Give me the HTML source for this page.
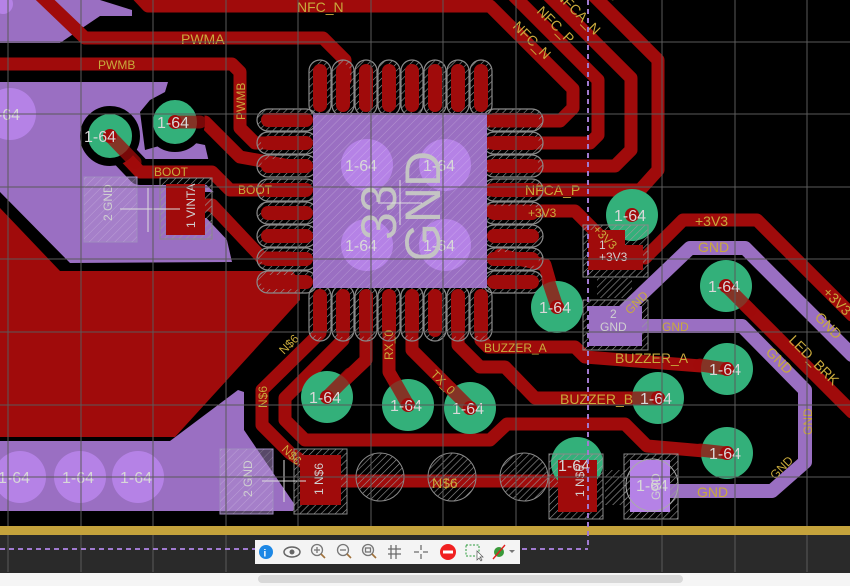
<!DOCTYPE html>
<html><head><meta charset="utf-8"><style>
html,body{margin:0;padding:0;background:#000;width:850px;height:586px;overflow:hidden}
svg{display:block}
text{font-family:"Liberation Sans",sans-serif}
.g{fill:#c9aa3c;font-size:14px}
.gs{fill:#c9aa3c;font-size:12px}
.w{fill:#d8d8d8;font-size:16px}
.ws{fill:#d0d0d0;font-size:12px}
</style></head><body>
<svg width="850" height="586" viewBox="0 0 850 586" xmlns="http://www.w3.org/2000/svg">
<defs>
<pattern id="h" width="5" height="5" patternUnits="userSpaceOnUse" patternTransform="rotate(45)">
<line x1="0" y1="0" x2="0" y2="5" stroke="#9a9a9a" stroke-width="1.2"/>
</pattern>
<pattern id="hl" width="6" height="6" patternUnits="userSpaceOnUse" patternTransform="rotate(45)">
<line x1="0" y1="0" x2="0" y2="6" stroke="#ffffff" stroke-opacity="0.25" stroke-width="1"/>
</pattern>
</defs>
<rect width="850" height="586" fill="#000"/>

<g fill="#9a6fc2">
<polygon points="30,0 100,0 132,10 132,16 100,16 60,43 0,43 0,0"/>
<polygon points="0,82 168,82 165,92 150,100 140,112 145,150 180,140 205,145 232,262 70,263 0,192"/>
<polygon points="0,441 170,441 238,390 244,392 244,430 295,505 293,511 0,511"/>
</g>

<polygon points="0,208 60,271 292,271 300,280 300,300 175,437 0,437" fill="#a00b0b"/>

<g fill="none" stroke="#000" stroke-width="26" stroke-linejoin="round" stroke-linecap="round">
<polyline points="103,133 140,172 212,172 230,190 290,190"/>
<polyline points="175,122 205,122 240,157 290,166"/>
<polyline points="195,205 212,205 262,258 290,258"/>
</g>

<g fill="none" stroke="#9a6fc2" stroke-width="14" stroke-linejoin="round" stroke-linecap="round">
<polyline points="625,310 690,248 745,248 852,355"/>
<polyline points="640,326 742,326 805,390 805,462 772,491 660,491"/>
</g>

<g fill="none" stroke="#a00b0b" stroke-width="13" stroke-linejoin="round" stroke-linecap="round">
<polyline points="135,-8 148,6 490,6 573,89 573,108 560,121 490,121"/>
<polyline points="510,-8 598,80 598,135 590,143 490,143"/>
<polyline points="545,-8 631,78 631,150 615,166 490,166"/>
<polyline points="590,-8 658,60 658,170 640,190 490,190"/>
<polyline points="40,-5 85,38 323,38 345,60 345,80"/>
<polyline points="0,64 232,64 240,72 240,128 255,143 290,143"/>
<polyline points="175,122 205,122 240,157 290,166"/>
<polyline points="103,133 140,172 212,172 230,190 290,190"/>
<polyline points="195,205 212,205 262,258 290,258"/>
<polyline points="490,211 575,211 598,234"/>
<polyline points="645,258 683,220 757,220 852,315"/>
<polyline points="726,286 852,412"/>
<polyline points="481,333 481,340 488,347 575,347 585,357 727,368"/>
<polyline points="458,333 458,345 480,367 505,367 535,398 658,398"/>
<polyline points="320,333 262,390 262,425 290,453 315,470"/>
<polyline points="343,333 343,340 285,398 285,420 305,440 490,440 507,424 625,424 647,446 727,453"/>
<polyline points="366,333 366,360 327,397"/>
<polyline points="389,333 389,372 408,405"/>
<polyline points="412,333 412,350 470,408"/>
<polyline points="341,481 560,481"/>
<polyline points="500,255 545,265 557,307"/>
</g>

<!-- QFN pin outlines (individual capsules) -->
<g fill="url(#h)" stroke="#8a8a8a" stroke-width="1.2">
<rect x="309" y="60" width="22" height="56" rx="11"/><rect x="332" y="60" width="22" height="56" rx="11"/>
<rect x="355" y="60" width="22" height="56" rx="11"/><rect x="378" y="60" width="22" height="56" rx="11"/>
<rect x="401" y="60" width="22" height="56" rx="11"/><rect x="424" y="60" width="22" height="56" rx="11"/>
<rect x="447" y="60" width="22" height="56" rx="11"/><rect x="470" y="60" width="22" height="56" rx="11"/>
<rect x="309" y="285" width="22" height="56" rx="11"/><rect x="332" y="285" width="22" height="56" rx="11"/>
<rect x="355" y="285" width="22" height="56" rx="11"/><rect x="378" y="285" width="22" height="56" rx="11"/>
<rect x="401" y="285" width="22" height="56" rx="11"/><rect x="424" y="285" width="22" height="56" rx="11"/>
<rect x="447" y="285" width="22" height="56" rx="11"/><rect x="470" y="285" width="22" height="56" rx="11"/>
<rect x="257" y="109" width="60" height="22" rx="11"/><rect x="257" y="132" width="60" height="22" rx="11"/>
<rect x="257" y="155" width="60" height="22" rx="11"/><rect x="257" y="179" width="60" height="22" rx="11"/>
<rect x="257" y="202" width="60" height="22" rx="11"/><rect x="257" y="225" width="60" height="22" rx="11"/>
<rect x="257" y="248" width="60" height="22" rx="11"/><rect x="257" y="271" width="60" height="22" rx="11"/>
<rect x="483" y="109" width="60" height="22" rx="11"/><rect x="483" y="132" width="60" height="22" rx="11"/>
<rect x="483" y="155" width="60" height="22" rx="11"/><rect x="483" y="179" width="60" height="22" rx="11"/>
<rect x="483" y="202" width="60" height="22" rx="11"/><rect x="483" y="225" width="60" height="22" rx="11"/>
<rect x="483" y="248" width="60" height="22" rx="11"/><rect x="483" y="271" width="60" height="22" rx="11"/>
</g>
<g fill="#a00b0b">
<rect x="313" y="64" width="14" height="48" rx="7"/><rect x="336" y="64" width="14" height="48" rx="7"/>
<rect x="359" y="64" width="14" height="48" rx="7"/><rect x="382" y="64" width="14" height="48" rx="7"/>
<rect x="405" y="64" width="14" height="48" rx="7"/><rect x="428" y="64" width="14" height="48" rx="7"/>
<rect x="451" y="64" width="14" height="48" rx="7"/><rect x="474" y="64" width="14" height="48" rx="7"/>
<rect x="313" y="289" width="14" height="48" rx="7"/><rect x="336" y="289" width="14" height="48" rx="7"/>
<rect x="359" y="289" width="14" height="48" rx="7"/><rect x="382" y="289" width="14" height="48" rx="7"/>
<rect x="405" y="289" width="14" height="48" rx="7"/><rect x="428" y="289" width="14" height="48" rx="7"/>
<rect x="451" y="289" width="14" height="48" rx="7"/><rect x="474" y="289" width="14" height="48" rx="7"/>
<rect x="261" y="113" width="52" height="14" rx="7"/><rect x="261" y="136" width="52" height="14" rx="7"/>
<rect x="261" y="159" width="52" height="14" rx="7"/><rect x="261" y="183" width="52" height="14" rx="7"/>
<rect x="261" y="206" width="52" height="14" rx="7"/><rect x="261" y="229" width="52" height="14" rx="7"/>
<rect x="261" y="252" width="52" height="14" rx="7"/><rect x="261" y="275" width="52" height="14" rx="7"/>
<rect x="487" y="113" width="52" height="14" rx="7"/><rect x="487" y="136" width="52" height="14" rx="7"/>
<rect x="487" y="159" width="52" height="14" rx="7"/><rect x="487" y="183" width="52" height="14" rx="7"/>
<rect x="487" y="206" width="52" height="14" rx="7"/><rect x="487" y="229" width="52" height="14" rx="7"/>
<rect x="487" y="252" width="52" height="14" rx="7"/><rect x="487" y="275" width="52" height="14" rx="7"/>
</g>

<rect x="313" y="113" width="174" height="175" fill="#9a6fc2"/>
<g fill="#b582e6">
<circle cx="367" cy="165" r="26"/><circle cx="445" cy="165" r="26"/>
<circle cx="367" cy="245" r="26"/><circle cx="445" cy="245" r="26"/>
</g>
<rect x="313" y="113" width="174" height="175" fill="url(#hl)"/>
<g class="w"><text x="345" y="171">1-64</text><text x="423" y="171">1-64</text><text x="345" y="251">1-64</text><text x="423" y="251">1-64</text></g>
<text transform="translate(396,240) rotate(-90)" fill="#c4c4c4" font-size="50" font-family="Liberation Sans">33</text>
<text transform="translate(440,262) rotate(-90)" fill="#c4c4c4" font-size="50" font-family="Liberation Sans">GND</text>
<g stroke="#ddd" stroke-width="1"><line x1="400" y1="180" x2="400" y2="225"/><line x1="378" y1="203" x2="422" y2="203"/></g>

<g fill="#b582e6">
<circle cx="10" cy="114" r="26"/><circle cx="20" cy="477" r="26"/><circle cx="80" cy="477" r="26"/><circle cx="138" cy="477" r="26"/>
<circle cx="3" cy="4" r="10"/>
</g>
<g class="w"><text x="-12" y="120">1-64</text><text x="-2" y="483">1-64</text><text x="62" y="483">1-64</text><text x="120" y="483">1-64</text></g>

<rect x="84" y="177" width="53" height="65" fill="#b090d0" fill-opacity="0.5" stroke="#a08cc0"/>
<rect x="84" y="177" width="53" height="65" fill="url(#hl)"/>
<rect x="160" y="178" width="52" height="61" fill="url(#h)" stroke="#888"/>
<rect x="166" y="184" width="39" height="51" fill="#a00b0b"/>
<text transform="translate(112,221) rotate(-90)" class="ws">2 GND</text>
<text transform="translate(195,228) rotate(-90)" class="ws">1 VINTA</text>
<line x1="120" y1="209" x2="180" y2="209" stroke="#ddd"/><line x1="148" y1="188" x2="148" y2="232" stroke="#ddd"/>

<rect x="220" y="449" width="53" height="65" fill="#b090d0" fill-opacity="0.5" stroke="#a08cc0"/>
<rect x="220" y="449" width="53" height="65" fill="url(#hl)"/>
<rect x="294" y="449" width="53" height="65" fill="url(#h)" stroke="#888"/>
<rect x="300" y="455" width="41" height="50" fill="#a00b0b"/>
<text transform="translate(252,497) rotate(-90)" class="ws">2 GND</text>
<text transform="translate(323,495) rotate(-90)" class="ws">1 N$6</text>
<line x1="262" y1="481" x2="306" y2="481" stroke="#ddd"/><line x1="284" y1="460" x2="284" y2="502" stroke="#ddd"/>
<g fill="url(#h)" stroke="#8a8a8a"><circle cx="380" cy="477" r="24"/><circle cx="452" cy="477" r="24"/><circle cx="524" cy="477" r="24"/></g>

<g fill="#33b07a">
<circle cx="110" cy="136" r="26" stroke="#000" stroke-width="8"/><circle cx="175" cy="122" r="26" stroke="#000" stroke-width="8"/>
<circle cx="327" cy="397" r="26"/><circle cx="408" cy="405" r="26"/><circle cx="470" cy="408" r="26"/>
<circle cx="557" cy="307" r="26"/><circle cx="632" cy="215" r="26"/><circle cx="726" cy="286" r="26"/>
<circle cx="727" cy="369" r="26"/><circle cx="658" cy="398" r="26"/><circle cx="727" cy="453" r="26"/><circle cx="577" cy="463" r="26"/>
</g>
<g fill="#a00b0b">
<circle cx="110" cy="136" r="7"/><circle cx="175" cy="122" r="7"/><circle cx="327" cy="397" r="7"/><circle cx="408" cy="405" r="7"/>
<circle cx="470" cy="408" r="7"/><circle cx="557" cy="307" r="7"/><circle cx="632" cy="215" r="7"/><circle cx="726" cy="286" r="7"/>
<circle cx="727" cy="369" r="7"/><circle cx="658" cy="398" r="7"/><circle cx="727" cy="453" r="7"/>
</g>
<g fill="none" stroke="#a00b0b" stroke-width="13" stroke-opacity="0.75" stroke-linecap="round">
<line x1="110" y1="136" x2="135" y2="162"/><line x1="175" y1="122" x2="200" y2="122"/>
<line x1="327" y1="397" x2="350" y2="374"/><line x1="408" y1="405" x2="395" y2="382"/><line x1="470" y1="408" x2="450" y2="388"/>
<line x1="557" y1="307" x2="548" y2="280"/><line x1="727" y1="369" x2="700" y2="365"/><line x1="727" y1="453" x2="700" y2="450"/>
<line x1="726" y1="286" x2="750" y2="310"/><line x1="658" y1="398" x2="635" y2="398"/>
</g>

<rect x="583" y="225" width="65" height="52" fill="url(#h)" stroke="#888"/>
<polygon points="588,230 625,230 625,245 643,245 643,270 588,270" fill="#a00b0b"/>
<rect x="597" y="278" width="35" height="20" fill="url(#h)"/>
<rect x="583" y="300" width="65" height="50" fill="url(#h)" stroke="#888"/>
<rect x="589" y="306" width="53" height="40" fill="#9a6fc2"/>
<rect x="549" y="454" width="54" height="65" fill="url(#h)" stroke="#888"/>
<rect x="558" y="460" width="39" height="52" fill="#a00b0b"/>
<rect x="605" y="470" width="22" height="35" fill="url(#h)"/>
<rect x="624" y="454" width="54" height="65" fill="url(#h)" stroke="#888"/>
<rect x="630" y="460" width="40" height="52" fill="#b582e6"/>
<circle cx="652" cy="485" r="26" fill="none" stroke="#aaa"/>

<g class="w">
<text x="84" y="142">1-64</text><text x="157" y="128">1-64</text>
<text x="309" y="403">1-64</text><text x="390" y="411">1-64</text><text x="452" y="414">1-64</text>
<text x="539" y="313">1-64</text><text x="614" y="221">1-64</text><text x="708" y="292">1-64</text>
<text x="709" y="375">1-64</text><text x="640" y="404">1-64</text><text x="709" y="459">1-64</text>
<text x="558" y="471">1-64</text><text x="636" y="491">1-64</text>
</g>
<g class="ws">
<text x="599" y="249">1</text><text x="599" y="261">+3V3</text>
<text x="610" y="318">2</text><text x="600" y="331">GND</text>
<text transform="translate(584,497) rotate(-90)">1 N$6</text>
<text transform="translate(660,500) rotate(-90)">GND</text>
</g>

<g class="g">
<text x="297" y="12">NFC_N</text><text x="181" y="44">PWMA</text>
<text x="525" y="195">NFCA_P</text>
<text x="695" y="226">+3V3</text><text x="698" y="252">GND</text>
<text x="615" y="363">BUZZER_A</text><text x="560" y="404">BUZZER_B</text>
<text x="432" y="488">N$6</text><text x="697" y="497">GND</text>
<text transform="translate(512,27) rotate(45)">NFC_N</text>
<text transform="translate(536,12) rotate(45)">NFC_P</text>
<text transform="translate(555,-4) rotate(45)">NFCA_N</text>
<text transform="translate(604,-2) rotate(45)">P</text>
<text transform="translate(765,353) rotate(45)">GND</text>
<text transform="translate(788,341) rotate(45)">LED_BRK</text>
<text transform="translate(814,318) rotate(45)">GND</text>
<text transform="translate(822,293) rotate(45)">+3V3</text>
</g>
<g class="gs">
<text x="98" y="69">PWMB</text><text x="154" y="176">BOOT</text><text x="238" y="194">BOOT</text>
<text x="528" y="217">+3V3</text><text x="662" y="331">GND</text><text x="484" y="352">BUZZER_A</text>
<text transform="translate(245,120) rotate(-90)">PWMB</text>
<text transform="translate(592,230) rotate(45)">+3V3</text>
<text transform="translate(630,315) rotate(-45)">GND</text>
<text transform="translate(812,435) rotate(-90)">GND</text>
<text transform="translate(775,480) rotate(-45)">GND</text>
<text transform="translate(284,355) rotate(-45)">N$6</text>
<text transform="translate(267,408) rotate(-90)">N$6</text>
<text transform="translate(281,450) rotate(45)">N$6</text>
<text transform="translate(393,360) rotate(-90)">RX_0</text>
<text transform="translate(430,375) rotate(45)">TX_0</text>
</g>

<g stroke="#5a5a5a" stroke-width="1">
<line x1="8" y1="0" x2="8" y2="572"/><line x1="81" y1="0" x2="81" y2="572"/><line x1="153" y1="0" x2="153" y2="572"/>
<line x1="226" y1="0" x2="226" y2="572"/><line x1="298" y1="0" x2="298" y2="572"/><line x1="371" y1="0" x2="371" y2="572"/>
<line x1="443" y1="0" x2="443" y2="572"/><line x1="516" y1="0" x2="516" y2="572"/><line x1="662" y1="0" x2="662" y2="572"/>
<line x1="735" y1="0" x2="735" y2="572"/><line x1="807" y1="0" x2="807" y2="572"/>
<line x1="0" y1="42" x2="850" y2="42"/><line x1="0" y1="114" x2="850" y2="114"/><line x1="0" y1="187" x2="850" y2="187"/>
<line x1="0" y1="259" x2="850" y2="259"/><line x1="0" y1="332" x2="850" y2="332"/><line x1="0" y1="405" x2="850" y2="405"/>
<line x1="0" y1="477" x2="850" y2="477"/>
</g>

<rect x="0" y="526" width="850" height="9" fill="#c5a33c"/>
<rect x="0" y="535" width="850" height="38" fill="#2a2a2a"/>
<g stroke="#5a5a5a"><line x1="8" y1="535" x2="8" y2="572"/><line x1="81" y1="535" x2="81" y2="572"/><line x1="153" y1="535" x2="153" y2="572"/><line x1="226" y1="535" x2="226" y2="572"/><line x1="662" y1="535" x2="662" y2="572"/><line x1="735" y1="535" x2="735" y2="572"/><line x1="807" y1="535" x2="807" y2="572"/></g>
<g stroke="#a07ad0" stroke-width="2" stroke-dasharray="5,4" fill="none">
<line x1="588" y1="0" x2="588" y2="549"/><line x1="0" y1="549" x2="588" y2="549"/>
</g>
<rect x="0" y="573" width="850" height="13" fill="#f5f5f5"/>
<rect x="258" y="575" width="425" height="8" rx="4" fill="#d8d8d8"/>

<rect x="255" y="540" width="265" height="24" fill="#f4f4f4"/>
<circle cx="266" cy="552" r="7" fill="#1e88e5"/><text x="263.5" y="556.5" fill="#fff" font-size="10" font-weight="bold">i</text>
<ellipse cx="292" cy="552" rx="8" ry="5" fill="none" stroke="#666" stroke-width="1.5"/><circle cx="292" cy="552" r="2.5" fill="#666"/>
<g fill="none" stroke="#777" stroke-width="1.3">
<circle cx="317" cy="550" r="5.5"/><line x1="314" y1="550" x2="320" y2="550"/><line x1="317" y1="547" x2="317" y2="553"/>
<circle cx="343" cy="550" r="5.5"/><line x1="340" y1="550" x2="346" y2="550"/>
<circle cx="368" cy="550" r="5.5"/><rect x="365.5" y="548" width="5" height="4"/>
</g>
<g stroke="#a0703a" stroke-width="1.6"><line x1="321" y1="554" x2="325" y2="558"/><line x1="347" y1="554" x2="351" y2="558"/><line x1="372" y1="554" x2="376" y2="558"/></g>
<g stroke="#666" stroke-width="1.2">
<line x1="391" y1="545" x2="391" y2="559"/><line x1="396" y1="545" x2="396" y2="559"/><line x1="388" y1="549" x2="401" y2="549"/><line x1="388" y1="554" x2="401" y2="554"/>
<line x1="421" y1="545" x2="421" y2="550"/><line x1="421" y1="554" x2="421" y2="559"/><line x1="414" y1="552" x2="419" y2="552"/><line x1="423" y1="552" x2="428" y2="552"/>
</g>
<circle cx="448" cy="552" r="8" fill="#f02020"/><rect x="443" y="550.5" width="10" height="3" fill="#fff"/>
<rect x="466" y="545" width="13" height="11" fill="none" stroke="#2a9a3a" stroke-dasharray="2,1.5"/>
<polygon points="477,551 477,560 479,558 481,561 482,560 480,557 483,557" fill="#fff" stroke="#555" stroke-width="0.7"/>
<circle cx="499" cy="552" r="5" fill="#3a9a3a"/><line x1="493" y1="559" x2="505" y2="545" stroke="#e02020" stroke-width="1.4"/>
<polygon points="509,550 515,550 512,553" fill="#777"/>
</svg>
</body></html>
